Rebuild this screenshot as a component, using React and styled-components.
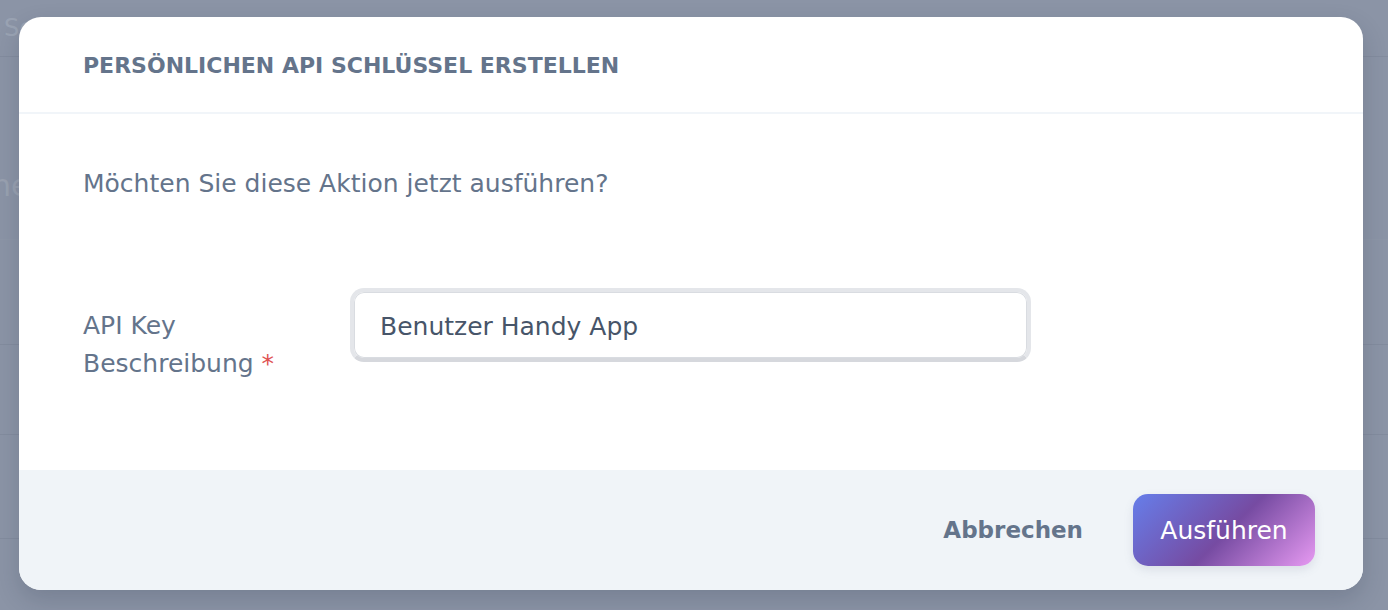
import React from "react";
import styled, { createGlobalStyle } from "styled-components";

const Global = createGlobalStyle`
  html, body { margin: 0; padding: 0; }
  body { font-family: "DejaVu Sans", "Open Sans", sans-serif; background: #8a93a5; }
`;

const Page = styled.div`
  position: relative;
  width: 1388px;
  height: 610px;
  overflow: hidden;
  background: #8b94a6;
`;

const Backdrop = styled.div`
  position: absolute;
  inset: 0;
  display: flex;
  flex-direction: column;
  color: #9aa3b3;
`;

const BgRow = styled.div`
  height: ${(p) => p.h}px;
  box-sizing: border-box;
  border-bottom: 1px solid ${(p) => p.line || "#838c9e"};
  padding: 0 0 ${(p) => p.pb || 0}px 4px;
  font-size: ${(p) => p.fs || 24}px;
  display: flex;
  align-items: ${(p) => (p.pb ? "flex-end" : "center")};
`;

const BgText = styled.span`
  margin-left: -12px;
  color: #99a1b0;
`;

const Stage = styled.div`
  position: relative;
  padding: 17px 25px 20px 19px;
`;

const Modal = styled.div`
  width: 1344px;
  height: 573px;
  background: #ffffff;
  border-radius: 22px;
  overflow: hidden;
  display: flex;
  flex-direction: column;
  box-shadow: 0 10px 25px rgba(30, 41, 59, 0.18);
`;

const Header = styled.div`
  height: 97px;
  box-sizing: border-box;
  border-bottom: 2px solid #f1f5f9;
  display: flex;
  align-items: center;
  padding: 2px 0 0 64px;
  font-size: 22px;
  font-weight: 700;
  color: #64748b;
`;

const Body = styled.div`
  flex: 1;
  padding: 52px 64px 0;
  display: flex;
  flex-direction: column;
`;

const Question = styled.p`
  margin: 0;
  font-size: 25px;
  color: #64748b;
  line-height: 36px;
`;

const FormRow = styled.div`
  margin-top: 86px;
  display: flex;
  align-items: flex-start;
`;

const Label = styled.label`
  width: 267px;
  font-size: 25px;
  line-height: 38px;
  color: #64748b;
  padding-top: 19px;
`;

const Required = styled.span`
  color: #e05252;
`;

const Input = styled.input`
  width: 681px;
  height: 74px;
  box-sizing: border-box;
  border: 4px solid #e4e6ea;
  border-bottom-color: #d6d8dd;
  border-radius: 14px;
  padding: 3px 26px 0;
  font-family: inherit;
  font-size: 25px;
  color: #475569;
  background: #fff;
  outline: none;
  box-shadow: inset 0 0 0 1px #d9dce1;
`;

const Footer = styled.div`
  height: 120px;
  background: #f0f4f8;
  display: flex;
  align-items: center;
  justify-content: flex-end;
  padding-right: 48px;
  gap: 50px;
`;

const TextButton = styled.button`
  border: none;
  background: none;
  font-family: inherit;
  font-size: 23px;
  font-weight: 700;
  color: #64748b;
  padding: 0;
  cursor: pointer;
`;

const PrimaryButton = styled.button`
  width: 182px;
  height: 72px;
  border: none;
  border-radius: 15px;
  font-family: inherit;
  font-size: 25px;
  color: #ffffff;
  background: linear-gradient(135deg, #667eea 0%, #764ba2 52%, #e79af2 100%);
  box-shadow: 0 4px 10px rgba(100, 116, 139, 0.15);
  cursor: pointer;
`;

export default function App() {
  return (
    <>
      <Global />
      <Page>
        <Backdrop>
          <BgRow h={57} fs={24}>Sc</BgRow>
          <BgRow h={183} fs={30} pb={36} line="#8d96a7">
            <BgText>ne</BgText>
          </BgRow>
          <BgRow h={105}></BgRow>
          <BgRow h={90}></BgRow>
          <BgRow h={104}></BgRow>
        </Backdrop>
        <Stage>
          <Modal>
            <Header>PERSÖNLICHEN API SCHLÜSSEL ERSTELLEN</Header>
            <Body>
              <Question>Möchten Sie diese Aktion jetzt ausführen?</Question>
              <FormRow>
                <Label htmlFor="desc">
                  API Key
                  <br />
                  Beschreibung <Required>*</Required>
                </Label>
                <Input id="desc" defaultValue="Benutzer Handy App" />
              </FormRow>
            </Body>
            <Footer>
              <TextButton>Abbrechen</TextButton>
              <PrimaryButton>Ausführen</PrimaryButton>
            </Footer>
          </Modal>
        </Stage>
      </Page>
    </>
  );
}
